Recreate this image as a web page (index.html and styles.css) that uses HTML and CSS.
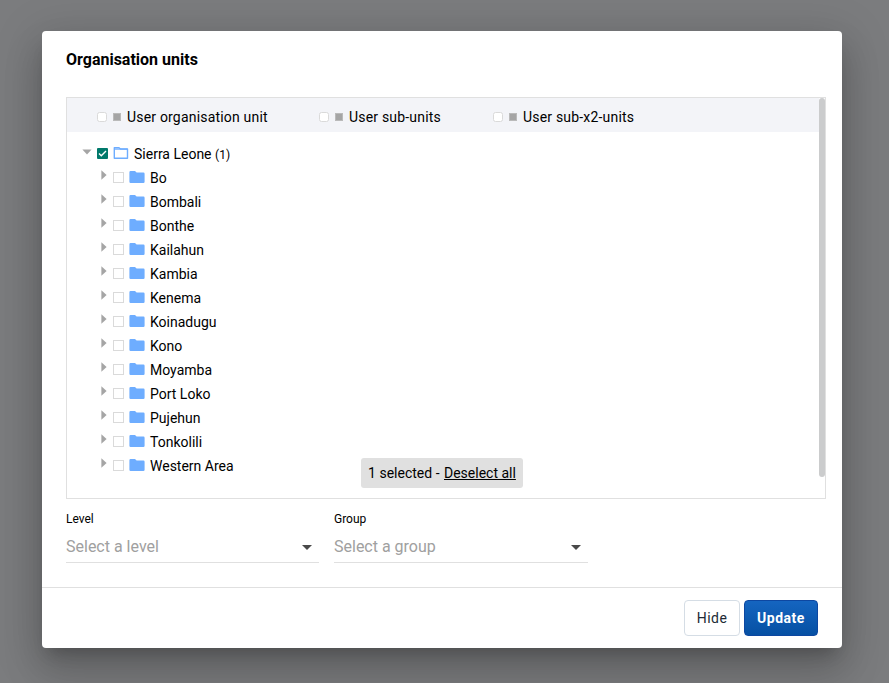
FILE: index.html
```html
<!DOCTYPE html>
<html lang="en">
<head>
<meta charset="utf-8">
<title>Organisation units</title>
<link rel="stylesheet" href="styles.css">
</head>
<body>
<svg width="0" height="0" class="defs">
  <symbol id="folder" viewBox="0 0 16 14"><path fill="#6eadff" d="M1.600 1H6l1.600 1.500h6.800q1.200 0 1.200 1.200v8.100q0 1.200-1.200 1.200H1.600Q.4 13 .4 11.800V2.200Q.4 1 1.600 1z"/></symbol>
  <symbol id="right" viewBox="0 0 6 10"><path fill="#a5a5a5" d="M.4.2 5.600 5 .4 9.800z"/></symbol>
</svg>
<main class="modal">
  <h1 class="title">Organisation units</h1>
  <section class="tree-box">
    <div class="scroll">
      <div class="presets">
        <label class="preset first"><span class="round"></span><span class="square"></span>User organisation unit</label>
        <label class="preset second"><span class="round"></span><span class="square"></span>User sub-units</label>
        <label class="preset"><span class="round"></span><span class="square"></span>User sub-x2-units</label>
      </div>
      <div class="root">
        <svg class="down" viewBox="0 0 10 6"><path fill="#a5a5a5" d="M.4.400h9.200L5 5.400z"/></svg>
        <svg class="checked" viewBox="0 0 11 11"><rect width="11" height="11" rx="1" fill="#00796b"/><path d="m2 5.500 2.300 2.300L9 3.100" fill="none" stroke="#fff" stroke-width="1.400"/></svg>
        <svg class="open" viewBox="0 0 16 14"><path d="M1.300 12.300V1.700h4.700l1.500 1.300h7v9.300z" fill="none" stroke="#6eadff" stroke-width="1.400" stroke-linejoin="round"/><path d="M1.500 3.100h13" fill="none" stroke="#6eadff" stroke-width="1.200"/></svg>
        <span>Sierra Leone <small>(1)</small></span>
      </div>
      <ul class="units">
        <li><svg class="right"><use href="#right"/></svg><i class="box"></i><svg class="folder"><use href="#folder"/></svg>Bo</li>
        <li><svg class="right"><use href="#right"/></svg><i class="box"></i><svg class="folder"><use href="#folder"/></svg>Bombali</li>
        <li><svg class="right"><use href="#right"/></svg><i class="box"></i><svg class="folder"><use href="#folder"/></svg>Bonthe</li>
        <li><svg class="right"><use href="#right"/></svg><i class="box"></i><svg class="folder"><use href="#folder"/></svg>Kailahun</li>
        <li><svg class="right"><use href="#right"/></svg><i class="box"></i><svg class="folder"><use href="#folder"/></svg>Kambia</li>
        <li><svg class="right"><use href="#right"/></svg><i class="box"></i><svg class="folder"><use href="#folder"/></svg>Kenema</li>
        <li><svg class="right"><use href="#right"/></svg><i class="box"></i><svg class="folder"><use href="#folder"/></svg>Koinadugu</li>
        <li><svg class="right"><use href="#right"/></svg><i class="box"></i><svg class="folder"><use href="#folder"/></svg>Kono</li>
        <li><svg class="right"><use href="#right"/></svg><i class="box"></i><svg class="folder"><use href="#folder"/></svg>Moyamba</li>
        <li><svg class="right"><use href="#right"/></svg><i class="box"></i><svg class="folder"><use href="#folder"/></svg>Port Loko</li>
        <li><svg class="right"><use href="#right"/></svg><i class="box"></i><svg class="folder"><use href="#folder"/></svg>Pujehun</li>
        <li><svg class="right"><use href="#right"/></svg><i class="box"></i><svg class="folder"><use href="#folder"/></svg>Tonkolili</li>
        <li><svg class="right"><use href="#right"/></svg><i class="box"></i><svg class="folder"><use href="#folder"/></svg>Western Area</li>
      </ul>
    </div>
    <div class="thumb"></div>
    <div class="chip">1 selected - <u>Deselect all</u></div>
  </section>
  <section class="fields">
    <div class="field level"><div class="label">Level</div><div class="select">Select a level<svg class="caret" viewBox="0 0 10 5"><path fill="#494949" d="M0 0h10L5 5z"/></svg></div></div>
    <div class="field group"><div class="label">Group</div><div class="select">Select a group<svg class="caret" viewBox="0 0 10 5"><path fill="#494949" d="M0 0h10L5 5z"/></svg></div></div>
  </section>
  <footer class="actions">
    <button class="btn">Hide</button>
    <button class="btn primary">Update</button>
  </footer>
</main>
</body>
</html>
```
FILE: styles.css
```css
* { box-sizing: border-box; }
html, body { height: 100%; }
body { margin: 0; padding: 31px 47px 0 42px; background: #7b7c7e; font-family: Roboto, sans-serif; font-size: 14px; color: #000; overflow: hidden; }
.defs { display: block; position: absolute; }
svg { display: block; flex: none; }
.modal { width: 800px; height: 617px; display: flex; flex-direction: column; background: #fff; border-radius: 4px; box-shadow: 0 11px 15px -7px rgba(0,0,0,.2), 0 24px 38px 3px rgba(0,0,0,.14), 0 9px 46px 8px rgba(0,0,0,.12); }
.title { margin: 0; padding: 17px 24px 0; height: 66px; font-size: 16px; line-height: 24px; font-weight: 700; }
.tree-box { position: relative; margin: 0 16px 0 24px; height: 402px; display: flex; border: 1px solid #e0e0e0; }
.scroll { width: 752px; }
.presets { height: 34px; padding: 4px 0 0 30px; display: flex; background: #f3f4f8; }
.preset { display: flex; align-items: center; line-height: 30px; letter-spacing: .19px; }
.first { width: 222px; }
.second { width: 174px; }
.round { width: 10px; height: 10px; background: #fff; border: 1px solid #dadada; border-radius: 2.5px; }
.square { width: 8px; height: 8px; margin: 0 6px 0 6px; background: #a5a5a5; border: 1px solid #bababa; }
.root { display: flex; align-items: center; height: 24px; margin-top: 10px; padding-left: 15px; }
.down { width: 10px; height: 6px; margin-top: -4px; }
.checked { width: 11px; height: 11px; margin: -1px 0 0 5px; }
.open { width: 16px; height: 14px; margin: -2px 5px 0 5px; }
.root small { font-size: 12px; }
.units { list-style: none; margin: 0; padding: 0 0 0 34px; }
.units li { display: flex; align-items: center; height: 24px; }
.right { width: 6px; height: 10px; margin-top: -6px; }
.box { width: 11px; height: 11px; margin: -1px 5px 0 6px; border: 1px solid #dadada; }
.folder { width: 16px; height: 14px; margin: -2px 5px 0 0; }
.thumb { width: 6px; height: 379px; background: #cbcccd; border-radius: 3px; }
.chip { position: absolute; left: 294px; top: 360px; width: 162px; height: 30px; line-height: 30px; text-align: center; background: #e0e0e0; border-radius: 3px; white-space: nowrap; }
.chip u { margin-left: 1px; text-underline-offset: 1px; }
.fields { display: flex; gap: 15px; padding: 12px 24px 0; height: 88px; }
.level { width: 253px; }
.group { width: 254px; }
.label { font-size: 12px; line-height: 16px; }
.select { height: 36px; display: flex; justify-content: space-between; align-items: center; padding: 4px 7px 0 0; border-bottom: 1px solid #e0e0e0; font-size: 16px; color: #a0a0a0; }
.caret { width: 10px; height: 5px; margin-top: 1px; }
.actions { flex: 1; display: flex; justify-content: flex-end; gap: 4px; border-top: 1px solid #e0e0e0; padding: 12px 24px 0; }
.btn { width: 56px; height: 36px; padding: 0; border: 1px solid #d5dde5; border-radius: 4px; background: #fff; font: 400 14px Roboto, sans-serif; letter-spacing: .5px; color: #212934; }
.primary { width: 74px; border-color: #0d47a1; background: linear-gradient(#1565c0, #0650a3); color: #fff; font-weight: 700; }
```
